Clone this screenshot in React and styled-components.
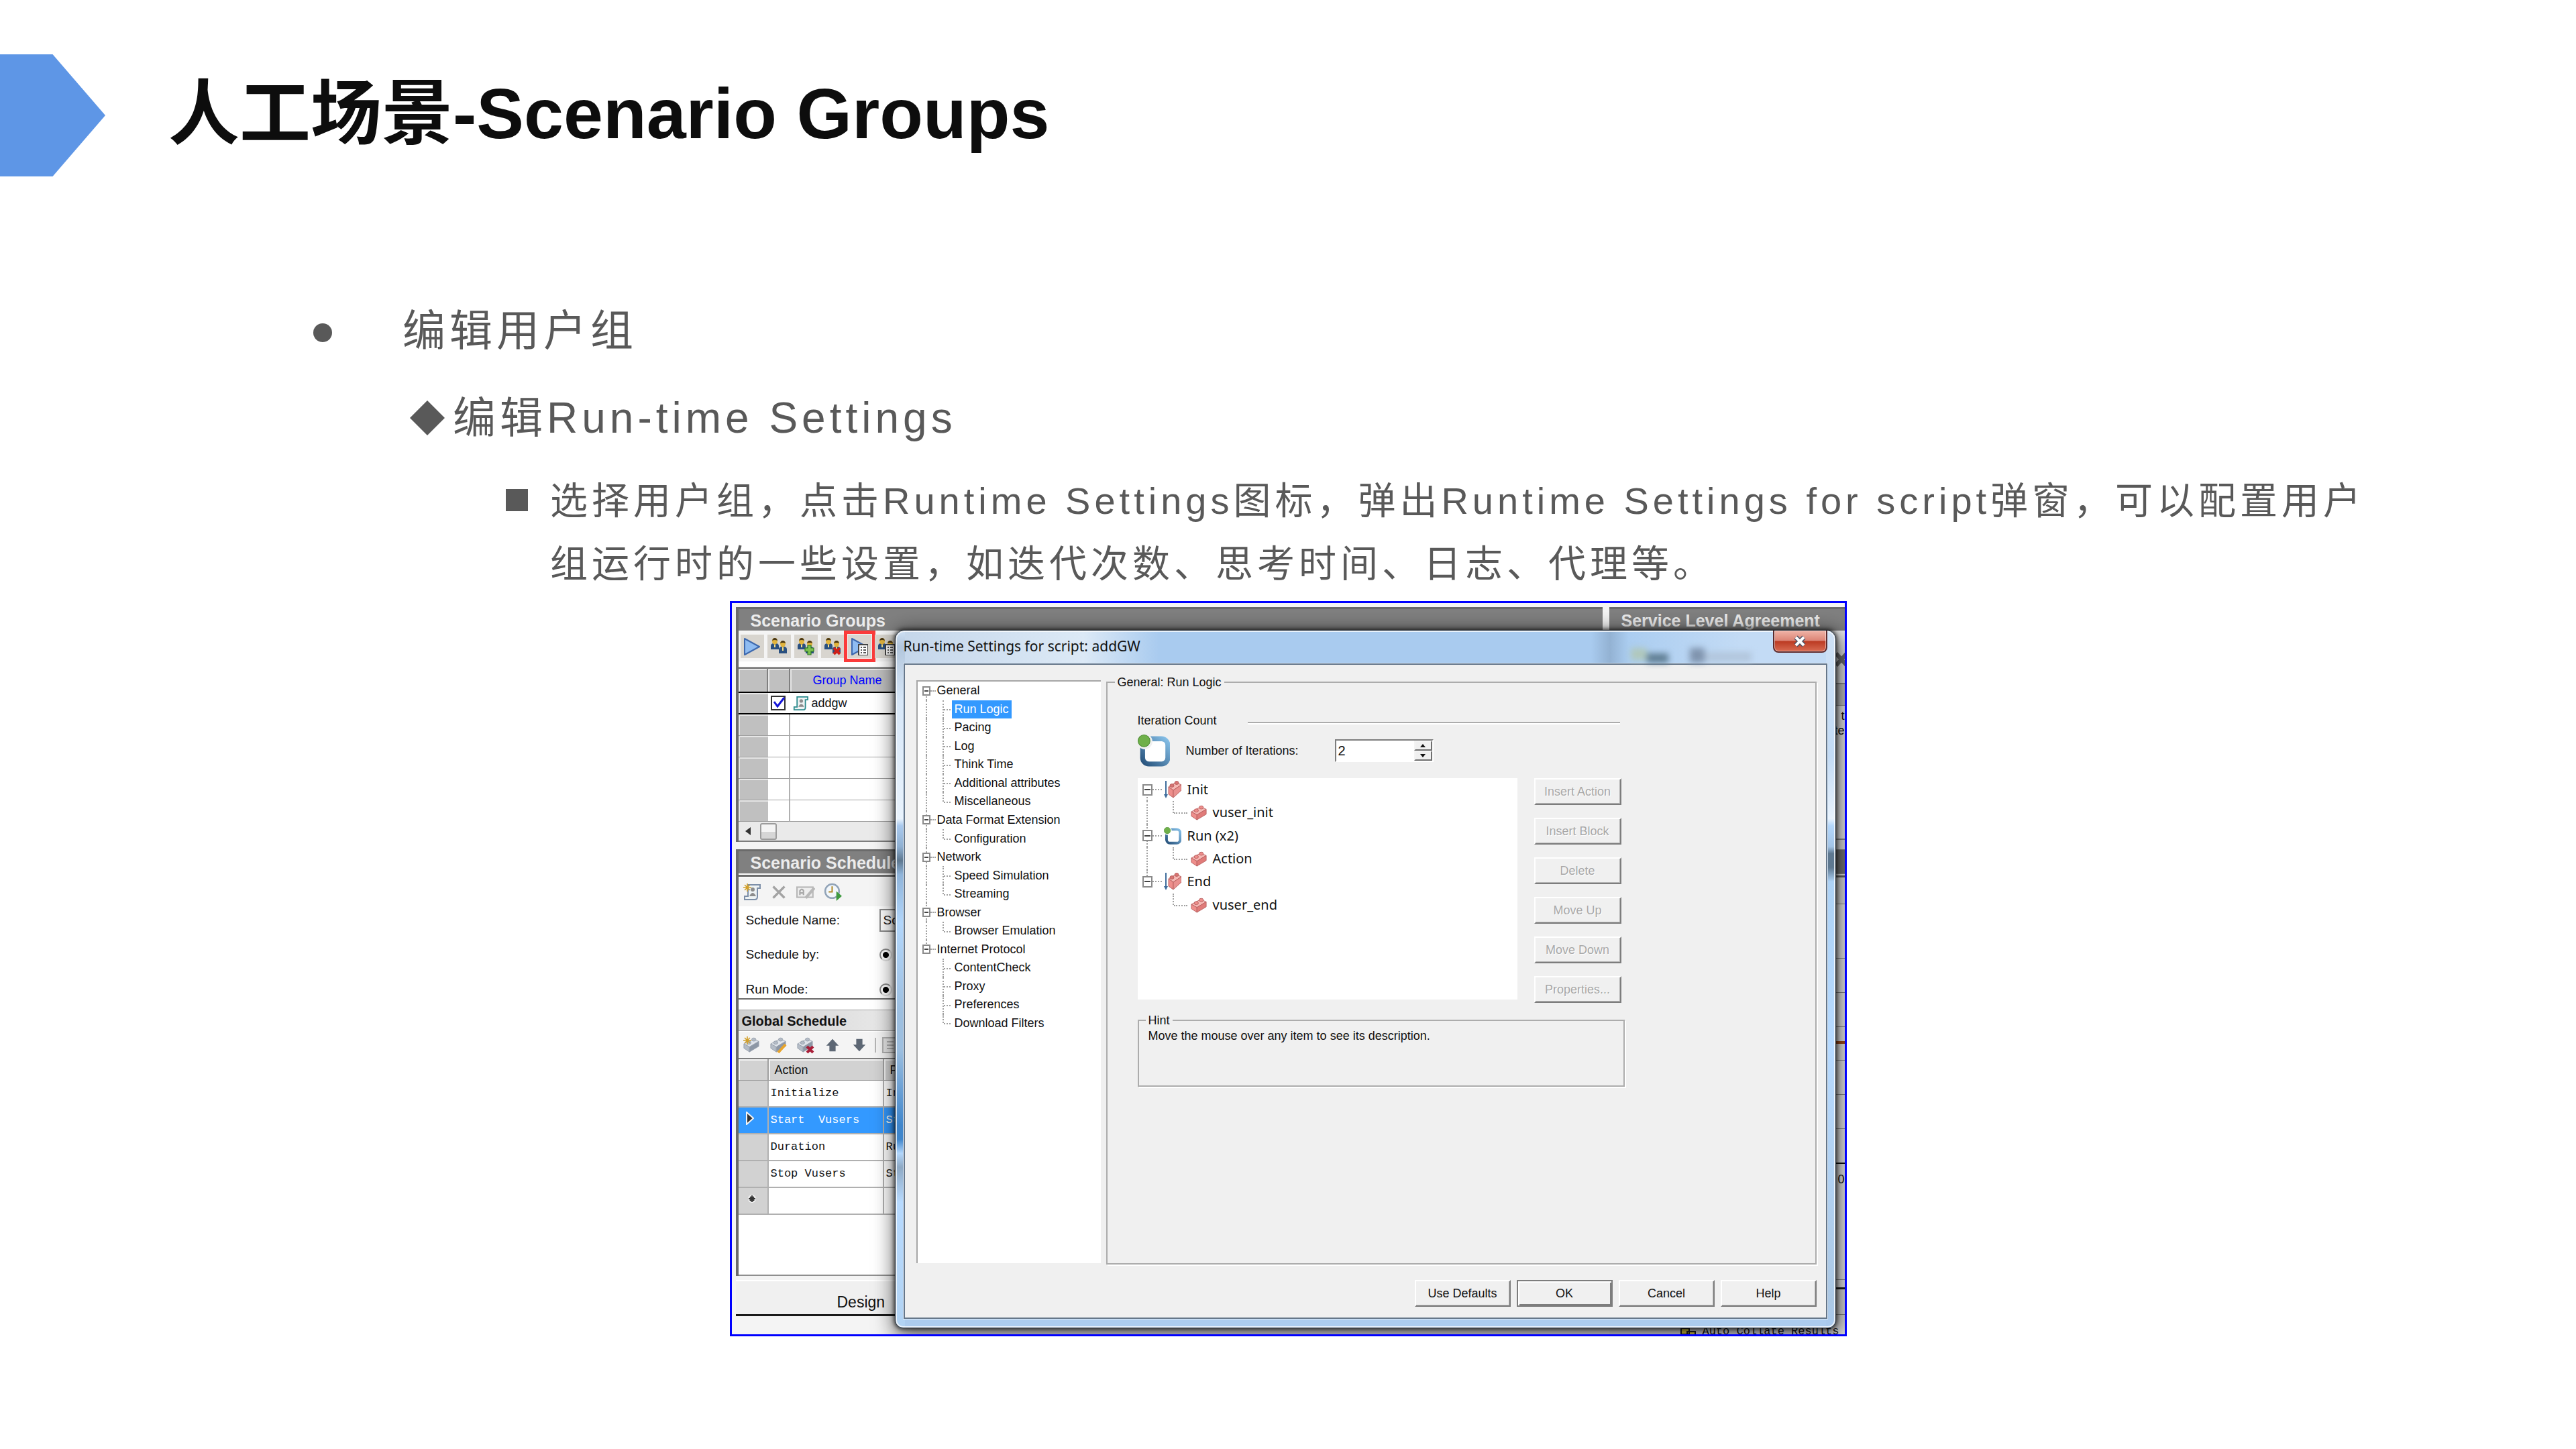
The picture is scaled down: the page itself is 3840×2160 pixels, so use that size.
import React from "react";
import styled, { createGlobalStyle, css } from "styled-components";

const GlobalStyle = createGlobalStyle`
  *, *::before, *::after { box-sizing: border-box; }
  body {
    margin: 0;
    background: #fff;
    font-family: "Liberation Sans", "Noto Sans CJK SC", sans-serif;
  }
  h1, h2, h3, p, ul { margin: 0; padding: 0; font-size: inherit; font-weight: inherit; }
  ul { list-style: none; }
  button, input { font: inherit; color: inherit; margin: 0; }
  button { padding: 0; }
`;

/* ---------- slide ---------- */

const Slide = styled.main`
  min-height: 100vh;
  padding: 81px 0 160px;
`;

const SlideHeader = styled.header`
  display: flex;
  align-items: center;
  gap: 94px;
  height: 182px;
`;

const Arrow = styled.span`
  width: 157px;
  height: 182px;
  background: #5e96e6;
  clip-path: polygon(0 0, 50% 0, 100% 50%, 50% 100%, 0 100%);
`;

const Title = styled.h1`
  padding-bottom: 6px;
  font-size: 106px;
  line-height: 150px;
  font-weight: 700;
  color: #0d0d0d;
`;

const Outline = styled.ul`
  margin-top: 165px;
  padding: 0 300px 0 467px;
  color: #595959;
`;

const levels = {
  1: css`
    grid-template-columns: 133px 1fr;
    font-size: 64px;
    line-height: 130px;
  `,
  2: css`
    margin-left: 144px;
    grid-template-columns: 64px 1fr;
    font-size: 64px;
    line-height: 130px;
  `,
  3: css`
    margin: 12px 0 0 287px;
    grid-template-columns: 66px 1fr;
    font-size: 56px;
    line-height: 94px;
  `,
};

const Point = styled.li`
  display: grid;
  letter-spacing: 6px;
  ${(p) => levels[p.$level]}
`;

const bullets = {
  1: css`
    width: 28px;
    height: 28px;
    margin-top: 54px;
    border-radius: 50%;
  `,
  2: css`
    width: 52px;
    height: 52px;
    margin-top: 39px;
    clip-path: polygon(50% 0, 100% 50%, 50% 100%, 0 50%);
  `,
  3: css`
    width: 33px;
    height: 33px;
    margin-top: 29px;
  `,
};

const Bullet = styled.span`
  background: #595959;
  ${(p) => bullets[p.$level]}
`;

const Shot = styled.figure`
  position: relative;
  width: 1665px;
  height: 1096px;
  margin: 8px auto 0;
  border: 3px solid #0000ff;
  background: #f0f0f0;
  overflow: hidden;
  color: #111;
  font-size: 18px;
  line-height: 22px;
`;

/* ---------- main window behind the dialog ---------- */

const Desk = styled.div`
  display: grid;
  grid-template-columns: 1292px 1fr;
  gap: 10px;
  height: 100%;
  padding: 6px 0 0 6px;
  background: #f4f4f4;
`;

const Column = styled.section`
  display: flex;
  flex-direction: column;
  min-width: 0;
`;

const Panel = styled.section`
  display: flex;
  flex-direction: column;
  border-left: 4px solid #6b6b6b;
  background: #fff;
  box-shadow: 0 ${(p) => p.$below || 0}px 0 #f4f4f4;
  margin-bottom: ${(p) => p.$below || 0}px;
`;

const PanelTitle = styled.h2`
  flex: none;
  height: ${(p) => p.$h || 36}px;
  padding: 1px 0 0 18px;
  border-top: 3px solid #6b6b6b;
  background: #808080;
  color: #ececec;
  font-size: 25px;
  line-height: 32px;
  font-weight: 700;
`;

const ToolRow = styled.div`
  display: flex;
  align-items: center;
  gap: ${(p) => p.$gap}px;
  height: ${(p) => p.$h}px;
  padding-left: 3px;
  background: #f4f4f4;
  border-top: 1px solid #fff;
`;

const ToolButton = styled.button`
  position: relative;
  display: grid;
  place-items: center;
  width: 35px;
  height: 35px;
  border: 0;
  background: ${(p) => (p.$flat ? "transparent" : "#d8d5cf")};
`;

const RedMark = styled.span`
  position: absolute;
  inset: -6px;
  border: 5px solid #fb3b3b;
`;

const Divider = styled.span`
  width: 2px;
  height: 22px;
  background: #b5b5b5;
`;

const Table = styled.table`
  table-layout: fixed;
  width: 100%;
  border-collapse: separate;
  border-spacing: 0;
  border-top: 2px solid #7d7d7d;
  text-align: left;
`;

const Col = styled.col`
  width: ${(p) => p.$w}px;
`;

const GroupHead = styled.th`
  height: 34px;
  padding: 0 0 0 34px;
  background: #c0c0c0;
  border-right: 2px solid #808080;
  box-shadow: inset 2px 2px 0 #e6e6e6;
  color: #0000ff;
  font-weight: 400;
`;

const GroupCell = styled.td`
  height: ${(p) => (p.$active ? 34 : 32)}px;
  padding: 0;
  background: ${(p) => (p.$head ? "#c0c0c0" : "#fff")};
  box-shadow: ${(p) => (p.$head ? "inset 2px 2px 0 #e6e6e6" : "none")};
  border-right: ${(p) => (p.$head ? 0 : 2)}px solid #b0b0b0;
  ${(p) =>
    p.$active
      ? css`
          border-top: 2px solid #000;
          border-bottom: 2px solid #000;
          border-right-width: 0;
        `
      : css`
          border-bottom: 1px solid #a0a0a0;
        `}
`;

const GroupLabel = styled.label`
  display: flex;
  align-items: center;
  gap: 5px;
  padding-left: 4px;
`;

const Tick = styled.input`
  appearance: none;
  display: block;
  width: 22px;
  height: 22px;
  margin-left: 4px;
  border: 2px solid #333;
  background: #fff;
`;

const TickWrap = styled.span`
  display: grid;
  & > * {
    grid-area: 1 / 1;
  }
  svg {
    margin: 0 0 0 6px;
    pointer-events: none;
  }
`;

const ScrollTrack = styled.div`
  display: flex;
  align-items: center;
  gap: 14px;
  height: 30px;
  padding-left: 10px;
  background: #eaeaea;
  border-bottom: 2px solid #7d7d7d;
`;

const ScrollThumb = styled.span`
  width: 25px;
  height: 25px;
  border: 2px solid #9c9c9c;
  border-radius: 3px;
  background: linear-gradient(#f4f4f4 50%, #d6d6d6 50%);
`;

const Form = styled.form`
  display: grid;
  grid-template-columns: 199px 120px;
  grid-template-rows: 42px 60px 44px;
  align-items: center;
  height: 139px;
  padding-left: 11px;
  border-bottom: 2px solid #6b6b6b;
  font-size: 19px;
  overflow: hidden;
`;

const NameInput = styled.input`
  width: 100%;
  height: 34px;
  padding: 0 4px;
  border: 2px solid #8a8a8a;
  background: #fff;
`;

const Radio = styled.input`
  appearance: none;
  width: 19px;
  height: 19px;
  border: 2px solid #8a8a8a;
  border-right-color: #e0e0e0;
  border-bottom-color: #e0e0e0;
  border-radius: 50%;
  background: radial-gradient(circle, #000 0 4px, #fff 5px);
`;

const SubTitle = styled.h3`
  height: 32px;
  margin-top: 15px;
  padding-left: 5px;
  border-top: 1px solid #a0a0a0;
  border-bottom: 1px solid #a0a0a0;
  background: linear-gradient(90deg, #cfcfcf, #f4f4f4 25%);
  font-size: 20px;
  line-height: 32px;
  font-weight: 700;
`;

const ScheduleHead = styled.th`
  height: 32px;
  padding: 0 0 0 9px;
  background: #d2d2d2;
  border-right: 2px solid #a0a0a0;
  border-bottom: 1px solid #a0a0a0;
  box-shadow: inset 2px 2px 0 #f4f4f4;
  font-weight: 400;
`;

const ScheduleCell = styled.td`
  height: 40px;
  padding: 0 0 0 ${(p) => (p.$head ? 11 : 3)}px;
  border-right: 2px solid #b0b0b0;
  border-bottom: 2px solid #b0b0b0;
  background: ${(p) => (p.$on ? "#3399ff" : p.$head ? "#d2d2d2" : "#fff")};
  color: ${(p) => (p.$on ? "#fff" : "#111")};
  font-family: "Liberation Mono", monospace;
  font-size: 17px;
  white-space: pre;
`;

const Blank = styled.div`
  height: 91px;
  border-bottom: 2px solid #8f8f8f;
`;

const DesignTab = styled.button`
  height: 54px;
  margin-top: 6px;
  padding: 12px 0 0 151px;
  border: 0;
  border-top: 2px solid #fff;
  border-bottom: 3px solid #1a1a1a;
  background: #f0f0f0;
  font-size: 23px;
  text-align: left;
`;

const StatusRow = styled.div`
  display: flex;
  flex: none;
  justify-content: flex-end;
  align-items: flex-end;
  gap: 8px;
  height: 34px;
  padding-right: 8px;
  background: #f0f0f0;
  font-family: "Liberation Mono", monospace;
  font-size: 17px;
  line-height: 18px;
  white-space: nowrap;
`;

const Strip = styled.div`
  flex: none;
  height: ${(p) => p.$h}px;
  padding-top: ${(p) => p.$drop || 0}px;
  background: ${(p) => p.$bg || "#fff"};
  border-bottom: ${(p) => p.$b || 1}px solid ${(p) => p.$line || "#9a9a9a"};
  text-align: right;
  overflow: hidden;
`;

/* ---------- dialog ---------- */

const Dialog = styled.section`
  position: absolute;
  left: 243px;
  top: 40px;
  width: 1403px;
  height: 1041px;
  display: flex;
  flex-direction: column;
  padding: 0 12px 13px 12px;
  border: 1px solid #1e2731;
  border-radius: 14px 14px 12px 12px;
  background:
    linear-gradient(#cfe1f5 0, #c3dbf5 18%, #e9f3fd 27%, #b4d7fb 28%, #a3c4e6 31%, #5e7890 32%, #5e7890 34%, #aed2f5 36%, #b7daff 60%, #acc8e4 96%, #a9caee 100%) right / 14px 100% no-repeat,
    linear-gradient(#cfe1f5 0, #b2c6dc 24px, #d7e7f8 10%, #e9f3fd 27%, #a9c9ee 28%, #8fb0d2 31%, #5e7890 33%, #8fb4da 35%, #b2d6fb 42%, #9dbfe0 55%, #9dbfe0 60%, #3f86cc 71%, #3f86cc 73%, #b2d6fb 75%, #8ea9c4 77%, #b7daff 82%, #b2d3f3 100%) left / 14px 100% no-repeat,
    linear-gradient(90deg, #c4d6ea, #dce9f6 20%, #a9cbef 28%, #a9cbef 74%, #93b2d3 76%, #abcdf0 78%, #c3dbf5 90%) top / 100% 50px no-repeat,
    #acccee;
  box-shadow:
    inset 0 0 0 2px rgba(255, 255, 255, 0.75),
    0 0 6px 1px rgba(0, 0, 0, 0.75),
    4px 8px 30px 6px rgba(0, 0, 0, 0.6);
`;

const TitleBar = styled.header`
  display: flex;
  justify-content: space-between;
  flex: none;
  height: 49px;
`;

const DialogTitle = styled.h2`
  font-family: "Noto Sans", sans-serif;
  font-size: 21px;
  line-height: 46px;
`;

const Ghosts = styled.span`
  width: 190px;
  height: 22px;
  margin: 26px 28px 0 auto;
  filter: blur(5px);
  background:
    linear-gradient(#b0c8bc, #b0c8bc) 6px 0 / 24px 18px no-repeat,
    linear-gradient(#5f7d92, #5f7d92) 30px 8px / 32px 14px no-repeat,
    linear-gradient(#8094ae, #8094ae) 94px 0 / 22px 22px no-repeat,
    linear-gradient(#b2c6dc, #b2c6dc) 116px 6px / 70px 14px no-repeat;
`;

const CloseButton = styled.button`
  display: grid;
  place-items: center;
  width: 81px;
  height: 33px;
  border: 2px solid #5c2a2c;
  border-top: 0;
  border-radius: 0 0 8px 8px;
  background: linear-gradient(#f0b4a8, #dc8475 48%, #bb3a22 52%, #d96b52);
  box-shadow: inset 0 0 0 1px rgba(255, 255, 255, 0.5);
`;

const Client = styled.div`
  flex: 1;
  display: flex;
  flex-direction: column;
  gap: 23px;
  padding: 15px 14px 16px 17px;
  border: 2px solid #66778a;
  background: #f0f0f0;
  box-shadow: 0 0 0 1px #dcebfa;
`;

const Main = styled.div`
  flex: 1;
  display: flex;
  gap: 8px;
`;

const Nav = styled.nav`
  width: 275px;
  margin: 8px 0 2px;
  padding-left: 7px;
  border-left: 2px solid #a6a6a6;
  border-top: 2px solid #a6a6a6;
  background: #fff;
`;

const Rows = styled.ul`
  display: flex;
  flex-direction: column;
  height: ${(p) => p.$h}px;
`;

const Row = styled.li`
  flex: 1;
  display: flex;
  align-items: center;
  min-height: 0;
`;

const Stem = styled.span`
  position: relative;
  align-self: stretch;
  display: grid;
  place-items: center;
  width: ${(p) => p.$w}px;
  &::before {
    content: "";
    position: absolute;
    left: calc(50% - 1px);
    top: ${(p) => (p.$from === "mid" ? "50%" : "0")};
    bottom: ${(p) => (p.$to === "mid" ? "50%" : "0")};
    border-left: ${(p) => (p.$none ? 0 : 2)}px dotted #a0a0a0;
  }
`;

/* Branch from a parent's line to its child: a vertical line with a tick to the right. */
const Elbow = styled.span`
  position: relative;
  align-self: stretch;
  width: ${(p) => p.$w}px;
  margin: 0 ${(p) => p.$after}px 0 ${(p) => p.$before}px;
  &::before {
    content: "";
    position: absolute;
    left: 0;
    top: 0;
    bottom: ${(p) => (p.$last ? "50%" : "0")};
    border-left: 2px dotted #a0a0a0;
  }
  &::after {
    content: "";
    position: absolute;
    left: 2px;
    right: 0;
    top: 50%;
    border-top: 2px dotted #a0a0a0;
  }
`;

const Toggle = styled.button`
  position: relative;
  width: ${(p) => p.$s}px;
  height: ${(p) => p.$s + 2}px;
  border: 2px solid #8a8a8a;
  background: #fff;
  &::before {
    content: "";
    position: absolute;
    left: 1px;
    right: 1px;
    top: calc(50% - 1px);
    height: 2px;
    background: #444;
  }
`;

const Dash = styled.span`
  width: ${(p) => p.$w}px;
  margin-right: ${(p) => p.$gap}px;
  border-top: 2px dotted #a0a0a0;
`;

const NavLink = styled.a`
  padding: 0 ${(p) => (p.$child ? 4 : 0)}px;
  line-height: 27px;
  white-space: nowrap;
  text-decoration: none;
  color: ${(p) => (p.$on ? "#fff" : "#111")};
  background: ${(p) => (p.$on ? "#3399ff" : "transparent")};
`;

const Group = styled.fieldset`
  min-width: 0;
  margin: 0;
  border: 2px solid #acacac;
  box-shadow: 2px 2px 0 #fff;
`;

const RunLogic = styled(Group)`
  flex: 1;
  padding: 34px 0 0 45px;
`;

const Legend = styled.legend`
  height: 22px;
  margin-left: ${(p) => p.$left}px;
  padding: 0 4px;
`;

const Pane = styled.div`
  width: 726px;
`;

const Heading = styled.h3`
  display: flex;
  align-items: center;
  gap: 46px;
  height: 24px;
  margin-right: 7px;
  &::after {
    content: "";
    flex: 1;
    height: 2px;
    margin-top: 6px;
    background: #acacac;
    box-shadow: 0 2px 0 #fff;
  }
`;

const Iterations = styled.div`
  display: grid;
  grid-template-columns: 72px 222px 147px;
  align-items: center;
  height: 54px;
  margin: 6px 0 14px;
`;

const SpinBox = styled.div`
  display: flex;
  height: 34px;
  border: 2px solid #7d7d7d;
  border-right-color: #fff;
  border-bottom-color: #fff;
  background: #fff;
`;

const SpinInput = styled.input`
  flex: 1;
  min-width: 0;
  padding: 0 3px;
  border: 0;
  outline: 0;
  background: transparent;
  font-size: 20px;
`;

const SpinButtons = styled.div`
  display: grid;
  width: 27px;
`;

const SpinButton = styled.button`
  display: grid;
  place-items: center;
  border: 2px solid #6f6f6f;
  border-left-color: #f4f4f4;
  border-top-color: #f4f4f4;
  background: #f0f0f0;
`;

const Editor = styled.div`
  display: flex;
  gap: 25px;
`;

const ActionTree = styled.div`
  width: 566px;
  height: 330px;
  padding: 0 0 0 7px;
  background: #fff;
  font-family: "Noto Sans", sans-serif;
  font-size: 20px;
`;

const ActionName = styled.span`
  margin-left: 9px;
`;

const ButtonStack = styled.div`
  display: grid;
  grid-auto-rows: 40px;
  gap: 19px;
  width: 130px;
`;

const PushButton = styled.button`
  border: 2px solid #7d7d7d;
  border-left-color: #fff;
  border-top-color: #fff;
  background: #f0f0f0;
  box-shadow: inset -1px -1px 0 #b4b4b4;
  &:disabled {
    color: #a8a8a8;
    text-shadow: 1px 1px 0 #fff;
  }
`;

const Hint = styled(Group)`
  height: 110px;
  margin-top: 15px;
  padding: 0 0 0 14px;
`;

const HintText = styled.p`
  line-height: 24px;
`;

const Footer = styled.footer`
  display: flex;
  justify-content: flex-end;
  gap: 9px;
`;

const FooterButton = styled(PushButton)`
  width: 143px;
  height: 40px;
  ${(p) =>
    p.$primary &&
    css`
      border: 2px solid #7d7d7d;
      box-shadow:
        inset 2px 2px 0 #fff,
        inset -2px -2px 0 #7d7d7d;
    `}
`;

/* ---------- drawings ---------- */

const Svg = ({ s = 26, h, box = "0 0 26 26", children }) => (
  <svg width={s} height={h || s} viewBox={box} aria-hidden="true">
    {children}
  </svg>
);

const PlayShape = () => (
  <path d="M2 1 L24 13 L2 25 Z" fill="#8fbcf2" stroke="#3c68ae" strokeWidth="2" strokeLinejoin="round" />
);

const UsersShape = () => (
  <g>
    <path d="M1 17 V12 Q1 9 4 8 H10 Q13 9 13 12 V17 Z" fill="#2a5080" />
    <path d="M3 5 Q3 0 7 0 Q11 0 11 5 Q11 9 7 10 Q3 9 3 5 Z" fill="#e2b43c" />
    <path d="M3 4 Q4 0 7 0 Q10 0 11 4 Q7 2 3 4 Z" fill="#4a3816" />
    <path d="M6 10 H8 V14 H6 Z" fill="#f5e08a" />
    <path d="M13 23 V17 Q13 14 16 13 H22 Q25 14 25 17 V23 Z" fill="#2a5080" />
    <path d="M15 8 Q15 4 19 4 Q23 4 23 8 Q23 13 19 14 Q15 13 15 8 Z" fill="#e2b43c" />
    <path d="M15 8 Q16 4 19 4 Q22 4 23 8 Q19 6 15 8 Z" fill="#4a3816" />
    <path d="M18 14 H20 V19 H18 Z" fill="#f5e08a" />
  </g>
);

const SheetShape = () => (
  <g>
    <rect x="12" y="10" width="14" height="16" fill="#fff" stroke="#444" strokeWidth="2" />
    <path d="M15 14h2M19 14h4M15 18h2M19 18h4M15 22h2M19 22h4" stroke="#555" strokeWidth="2" />
  </g>
);

const PlusShape = () => (
  <path d="M16 11h5v4h4v5h-4v5h-5v-5h-4v-5h4z" fill="#7cc04f" stroke="#2f7a24" strokeWidth="1.2" />
);

const CrossShape = ({ c = "#cf2018" }) => (
  <path d="M15 15 L24 24 M24 15 L15 24" stroke={c} strokeWidth="4" />
);

const Star = () => (
  <path d="M6 0v12M0 6h12M2 2l8 8M10 2l-8 8" stroke="#d2a02a" strokeWidth="1.6" />
);

const Brick = ({ s = 24, tone = "pink" }) => {
  const c =
    tone === "pink"
      ? { top: "#f6b9b5", left: "#ee8e8b", right: "#e07b79", line: "#b9605f" }
      : { top: "#dfe4ea", left: "#b4bcc6", right: "#8d97a5", line: "#98a1ae" };
  return (
    <Svg s={s}>
      <g stroke={c.line} strokeWidth="1" strokeLinejoin="round">
        <path d="M1 12 L16 4 L25 8 L10 17 Z" fill={c.top} />
        <path d="M1 12 L10 17 V25 L1 19 Z" fill={c.left} />
        <path d="M10 17 L25 8 V16 L10 25 Z" fill={c.right} />
        <ellipse cx="9" cy="10" rx="3.4" ry="2.6" fill={c.left} />
        <ellipse cx="17" cy="5" rx="3.4" ry="2.6" fill={c.left} />
      </g>
    </Svg>
  );
};

const StepBrick = () => (
  <Svg s={26}>
    <path d="M3 0 V22" stroke="#3f6d9c" strokeWidth="2" />
    <path d="M0 20 H6 L3 26 Z" fill="#3f6d9c" />
    <g stroke="#b9605f" strokeWidth="1" strokeLinejoin="round">
      <path d="M7 9 L18 2 L26 6 L14 14 Z" fill="#f6b9b5" />
      <path d="M7 9 L14 14 V25 L7 20 Z" fill="#ee8e8b" />
      <path d="M14 14 L26 6 V14 L14 25 Z" fill="#e9918f" />
      <ellipse cx="12" cy="7" rx="3" ry="2.4" fill="#d97573" />
      <ellipse cx="19" cy="3" rx="3" ry="2.4" fill="#d97573" />
    </g>
  </Svg>
);

const Loop = ({ s, halo }) => (
  <Svg s={s} box="0 0 46 46">
    <defs>
      <linearGradient id="loop" x1="1" y1="0" x2="0" y2="1">
        <stop offset="0" stopColor="#86c0e8" />
        <stop offset="1" stopColor="#27527c" />
      </linearGradient>
    </defs>
    <rect x="7" y="6" width="36" height="36" rx="9" fill="#fff" stroke="url(#loop)" strokeWidth="7" />
    <circle cx="10" cy="10" r="11" fill={halo} />
    <circle cx="9" cy="9" r="8.5" fill="#6fb04a" stroke="#4d8c34" />
  </Svg>
);

const Script = ({ star }) => (
  <Svg s={star ? 26 : 23}>
    <path d="M7 2 H25 V7 H21 V20 Q21 24 17 24 H2 V19 H7 Z" fill="#eef3f4" stroke={star ? "#7d8fa8" : "#2a8a8c"} strokeWidth="2" />
    <circle cx="14" cy="9" r="3" fill="#8d8d8d" />
    <path d="M9 19 Q14 9 19 19 Z" fill="#8d8d8d" />
    {star && <Star />}
  </Svg>
);

const GreyCross = () => (
  <Svg s={22}>
    <path d="M3 3 L23 23 M23 3 L3 23" stroke="#a4a4a4" strokeWidth="4" />
  </Svg>
);

const Rename = () => (
  <Svg s={28}>
    <rect x="1" y="6" width="22" height="14" fill="#eee" stroke="#b8b8b8" strokeWidth="2" />
    <path d="M5 17 V11 Q8 7 10 11 V17 M5 14 H10" fill="none" stroke="#a8a8a8" strokeWidth="2" />
    <path d="M13 21 L25 7" stroke="#b8b8b8" strokeWidth="4" />
  </Svg>
);

const Clock = () => (
  <Svg s={27}>
    <circle cx="12" cy="12" r="10" fill="#f2f7fb" stroke="#92a4b8" strokeWidth="2.4" />
    <path d="M12 5 V13 H7" fill="none" stroke="#b08a2c" strokeWidth="2" />
    <path d="M18 12 L26 19 L18 26 Z" fill="#3d9a3f" />
  </Svg>
);

const Pointer = ({ up }) => (
  <Svg s={20}>
    <path
      d={up ? "M13 1 L25 14 H19 V25 H7 V14 H1 Z" : "M13 25 L25 12 H19 V1 H7 V12 H1 Z"}
      fill="#5d6774"
    />
  </Svg>
);

const Caret = ({ up }) => (
  <Svg s={8} h={5} box="0 0 8 5">
    <path d={up ? "M4 0 L8 5 H0 Z" : "M0 0 H8 L4 5 Z"} fill="#111" />
  </Svg>
);

/* ---------- data ---------- */

const groupTools = [
  { name: "Start group", art: <PlayShape /> },
  { name: "Vusers", art: <UsersShape /> },
  { name: "Add group", art: <><UsersShape /><PlusShape /></> },
  { name: "Remove group", art: <><UsersShape /><CrossShape /></> },
  { name: "Run-time settings", art: <><PlayShape /><SheetShape /></>, marked: true },
  { name: "Details", art: <><UsersShape /><SheetShape /></> },
];

const schedule = [
  ["Initialize", "In"],
  ["Start  Vusers", "St"],
  ["Duration", "Ru"],
  ["Stop Vusers", "St"],
];

const settings = [
  ["General", ["Run Logic", "Pacing", "Log", "Think Time", "Additional attributes", "Miscellaneous"]],
  ["Data Format Extension", ["Configuration"]],
  ["Network", ["Speed Simulation", "Streaming"]],
  ["Browser", ["Browser Emulation"]],
  ["Internet Protocol", ["ContentCheck", "Proxy", "Preferences", "Download Filters"]],
];

const actions = [
  ["Init", "vuser_init", <StepBrick />],
  ["Run (x2)", "Action", <Loop s={26} halo="#fff" />],
  ["End", "vuser_end", <StepBrick />],
];

const editButtons = ["Insert Action", "Insert Block", "Delete", "Move Up", "Move Down", "Properties..."];

/* ---------- parts ---------- */

function GroupsPanel() {
  return (
    <Panel $below={11}>
      <PanelTitle $h={35}>Scenario Groups</PanelTitle>
      <ToolRow $h={46} $gap={5}>
        {groupTools.map((t) => (
          <ToolButton key={t.name} aria-label={t.name}>
            <Svg>{t.art}</Svg>
            {t.marked && <RedMark />}
          </ToolButton>
        ))}
      </ToolRow>
      <Strip $h={9} />
      <Table>
        <colgroup>
          <Col $w={44} />
          <Col $w={33} />
          <Col $w={300} />
          <col />
        </colgroup>
        <thead>
          <tr>
            <GroupHead />
            <GroupHead />
            <GroupHead>Group Name</GroupHead>
            <GroupHead />
          </tr>
        </thead>
        <tbody>
          <tr>
            <GroupCell $active $head />
            <GroupCell $active>
              <TickWrap>
                <Tick type="checkbox" id="addgw" defaultChecked />
                <Svg s={20} box="0 0 20 20">
                  <path d="M3 9 L8 16 L18 3" fill="none" stroke="#1414d8" strokeWidth="3" />
                </Svg>
              </TickWrap>
            </GroupCell>
            <GroupCell $active>
              <GroupLabel htmlFor="addgw">
                <Script />
                addgw
              </GroupLabel>
            </GroupCell>
            <GroupCell $active />
          </tr>
          {[1, 2, 3, 4, 5].map((n) => (
            <tr key={n}>
              <GroupCell $head />
              <GroupCell />
              <GroupCell />
              <GroupCell />
            </tr>
          ))}
        </tbody>
      </Table>
      <ScrollTrack>
        <Svg s={8} h={12} box="0 0 8 12">
          <path d="M8 0 V12 L0 6 Z" fill="#333" />
        </Svg>
        <ScrollThumb />
      </ScrollTrack>
    </Panel>
  );
}

function SchedulePanel() {
  return (
    <Panel>
      <PanelTitle>Scenario Schedule</PanelTitle>
      <Strip $h={5} $b={3} $line="#6b6b6b" />
      <ToolRow $h={44} $gap={5}>
        <ToolButton $flat aria-label="New schedule"><Script star /></ToolButton>
        <ToolButton $flat aria-label="Delete schedule"><GreyCross /></ToolButton>
        <ToolButton $flat aria-label="Rename schedule"><Rename /></ToolButton>
        <ToolButton $flat aria-label="Start time"><Clock /></ToolButton>
      </ToolRow>
      <Form>
        <label htmlFor="schedule-name">Schedule Name:</label>
        <NameInput id="schedule-name" defaultValue="Sc" />
        <label htmlFor="schedule-by">Schedule by:</label>
        <Radio type="radio" id="schedule-by" name="by" defaultChecked />
        <label htmlFor="run-mode">Run Mode:</label>
        <Radio type="radio" id="run-mode" name="mode" defaultChecked />
      </Form>
      <SubTitle>Global Schedule</SubTitle>
      <ToolRow $h={40} $gap={5}>
        <ToolButton $flat aria-label="Add action">
          <Svg>
            <Brick tone="grey" />
            <Star />
          </Svg>
        </ToolButton>
        <ToolButton $flat aria-label="Edit action">
          <Svg>
            <Brick tone="grey" />
            <path d="M12 24 L23 12" stroke="#e9a52c" strokeWidth="4" />
          </Svg>
        </ToolButton>
        <ToolButton $flat aria-label="Delete action">
          <Svg>
            <Brick tone="grey" />
            <CrossShape c="#a81e38" />
          </Svg>
        </ToolButton>
        <ToolButton $flat aria-label="Move action up"><Pointer up /></ToolButton>
        <ToolButton $flat aria-label="Move action down"><Pointer /></ToolButton>
        <Divider />
        <ToolButton $flat aria-label="Copy action">
          <Svg>
            <rect x="1" y="2" width="22" height="22" fill="#e6e6e6" stroke="#b0b0b0" strokeWidth="2" />
            <path d="M7 8h10M7 13h10M7 18h10" stroke="#b0b0b0" strokeWidth="2" />
          </Svg>
        </ToolButton>
      </ToolRow>
      <Table>
        <colgroup>
          <Col $w={45} />
          <Col $w={172} />
          <col />
        </colgroup>
        <thead>
          <tr>
            <ScheduleHead />
            <ScheduleHead>Action</ScheduleHead>
            <ScheduleHead>P</ScheduleHead>
          </tr>
        </thead>
        <tbody>
          {schedule.map(([name, detail], i) => (
            <tr key={name}>
              <ScheduleCell $head $on={i === 1}>
                {i === 1 && (
                  <Svg s={12} h={20} box="0 0 12 20">
                    <path d="M1 1 L11 10 L1 19 Z" fill="#333" stroke="#f4f4f4" strokeWidth="2" />
                  </Svg>
                )}
              </ScheduleCell>
              <ScheduleCell $on={i === 1}>{name}</ScheduleCell>
              <ScheduleCell $on={i === 1}>{detail}</ScheduleCell>
            </tr>
          ))}
          <tr>
            <ScheduleCell $head>
              <Svg s={18} box="0 0 18 18">
                <circle cx="9" cy="9" r="6" fill="#f4f4f4" />
                <path d="M9 4v10M4 9h10M6 6l6 6M12 6l-6 6" stroke="#333" strokeWidth="2" />
              </Svg>
            </ScheduleCell>
            <ScheduleCell />
            <ScheduleCell />
          </tr>
        </tbody>
      </Table>
      <Blank />
    </Panel>
  );
}

function AgreementColumn() {
  return (
    <Column>
      <PanelTitle $h={35}>Service Level Agreement</PanelTitle>
      <Strip $h={80} $bg="#f4f4f4" $b={2}>
        <Svg s={16} h={80} box="0 0 16 80">
          <path d="M3 34 L19 52 M19 34 L3 52" stroke="#777" strokeWidth="6" />
        </Svg>
      </Strip>
      <Strip $h={32} $bg="#d2d2d2" />
      <Strip $h={200} $b={2} $drop={4}>
        <p>t</p>
        <p>te</p>
      </Strip>
      <Strip $h={15} $bg="#f4f4f4" />
      <Strip $h={36} $bg="#808080" />
      <Strip $h={5} $b={3} $line="#6b6b6b" />
      <Strip $h={40} $bg="#f4f4f4" />
      <Strip $h={81} />
      <Strip $h={51} />
      <Strip $h={51} />
      <Strip $h={25} $b={4} $line="#b4531c" />
      <Strip $h={25} />
      <Strip $h={51} />
      <Strip $h={51} />
      <Strip $h={52} $b={2} $line="#111" />
      <Strip $h={173} $drop={12}>
        <p>0</p>
      </Strip>
      <Strip $h={14} $b={3} $line="#222" />
      <Strip $h={38} $bg="#f0f0f0" />
      <StatusRow>
        <Svg s={24} h={18} box="0 0 24 18">
          <path d="M1 4h12v9H1zM10 9h12v9H10z" fill="#f4e04a" stroke="#222" strokeWidth="2" />
        </Svg>
        Auto Collate Results
      </StatusRow>
    </Column>
  );
}

function SettingsNav() {
  const last = settings.length - 1;
  return (
    <Nav>
      <Rows $h={523}>
        {settings.flatMap(([name, children], g) => [
          <Row key={name}>
            <Stem $w={12} $from={g === 0 ? "mid" : "top"} $to={g === last ? "mid" : "end"}>
              <Toggle $s={12} aria-label={"Collapse " + name} />
            </Stem>
            <Dash $w={8} $gap={2} />
            <NavLink href={"#" + name}>{name}</NavLink>
          </Row>,
          ...children.map((child, i) => (
            <Row key={child}>
              <Stem $w={12} $none={g === last} />
              <Elbow $before={18} $w={12} $after={2} $last={i === children.length - 1} />
              <NavLink $child $on={child === "Run Logic"} href={"#" + child}>
                {child}
              </NavLink>
            </Row>
          )),
        ])}
      </Rows>
    </Nav>
  );
}

function Actions() {
  return (
    <ActionTree>
      <Rows $h={206}>
        {actions.flatMap(([name, child, icon], i) => [
          <Row key={name}>
            <Stem $w={15} $from={i === 0 ? "mid" : "top"} $to={i === 2 ? "mid" : "end"}>
              <Toggle $s={15} aria-label={"Collapse " + name} />
            </Stem>
            <Dash $w={14} $gap={3} />
            {icon}
            <ActionName>{name}</ActionName>
          </Row>,
          <Row key={child}>
            <Stem $w={15} $none={i === 2} />
            <Elbow $before={30} $w={22} $after={5} $last />
            <Brick s={24} />
            <ActionName>{child}</ActionName>
          </Row>,
        ])}
      </Rows>
    </ActionTree>
  );
}

function RuntimeDialog() {
  return (
    <Dialog>
      <TitleBar>
        <DialogTitle>Run-time Settings for script: addGW</DialogTitle>
        <Ghosts />
        <CloseButton aria-label="Close">
          <Svg s={18} box="0 0 18 18">
            <path d="M3 3 L15 15 M15 3 L3 15" stroke="#4a4f63" strokeWidth="7" />
            <path d="M3 3 L15 15 M15 3 L3 15" stroke="#fff" strokeWidth="4" />
          </Svg>
        </CloseButton>
      </TitleBar>
      <Client>
        <Main>
          <SettingsNav />
          <RunLogic>
            <Legend $left={-34}>General: Run Logic</Legend>
            <Pane>
              <Heading>Iteration Count</Heading>
              <Iterations>
                <Loop s={48} halo="#f0f0f0" />
                <label htmlFor="iterations">Number of Iterations:</label>
                <SpinBox>
                  <SpinInput id="iterations" defaultValue="2" />
                  <SpinButtons>
                    <SpinButton aria-label="More"><Caret up /></SpinButton>
                    <SpinButton aria-label="Fewer"><Caret /></SpinButton>
                  </SpinButtons>
                </SpinBox>
              </Iterations>
              <Editor>
                <Actions />
                <ButtonStack>
                  {editButtons.map((b) => (
                    <PushButton key={b} disabled>{b}</PushButton>
                  ))}
                </ButtonStack>
              </Editor>
              <Hint>
                <Legend $left={-4}>Hint</Legend>
                <HintText>Move the mouse over any item to see its description.</HintText>
              </Hint>
            </Pane>
          </RunLogic>
        </Main>
        <Footer>
          <FooterButton>Use Defaults</FooterButton>
          <FooterButton $primary>OK</FooterButton>
          <FooterButton>Cancel</FooterButton>
          <FooterButton>Help</FooterButton>
        </Footer>
      </Client>
    </Dialog>
  );
}

export default function App() {
  return (
    <>
      <GlobalStyle />
      <Slide lang="zh-CN">
        <SlideHeader>
          <Arrow />
          <Title>人工场景-Scenario Groups</Title>
        </SlideHeader>
        <Outline>
          <Point $level={1}>
            <Bullet $level={1} />
            编辑用户组
          </Point>
          <Point $level={2}>
            <Bullet $level={2} />
            编辑Run-time Settings
          </Point>
          <Point $level={3}>
            <Bullet $level={3} />
            选择用户组，点击Runtime Settings图标，弹出Runtime Settings for script弹窗，可以配置用户组运行时的一些设置，如迭代次数、思考时间、日志、代理等。
          </Point>
        </Outline>
        <Shot lang="en">
          <Desk>
            <Column>
              <GroupsPanel />
              <SchedulePanel />
              <DesignTab>Design</DesignTab>
            </Column>
            <AgreementColumn />
          </Desk>
          <RuntimeDialog />
        </Shot>
      </Slide>
    </>
  );
}
